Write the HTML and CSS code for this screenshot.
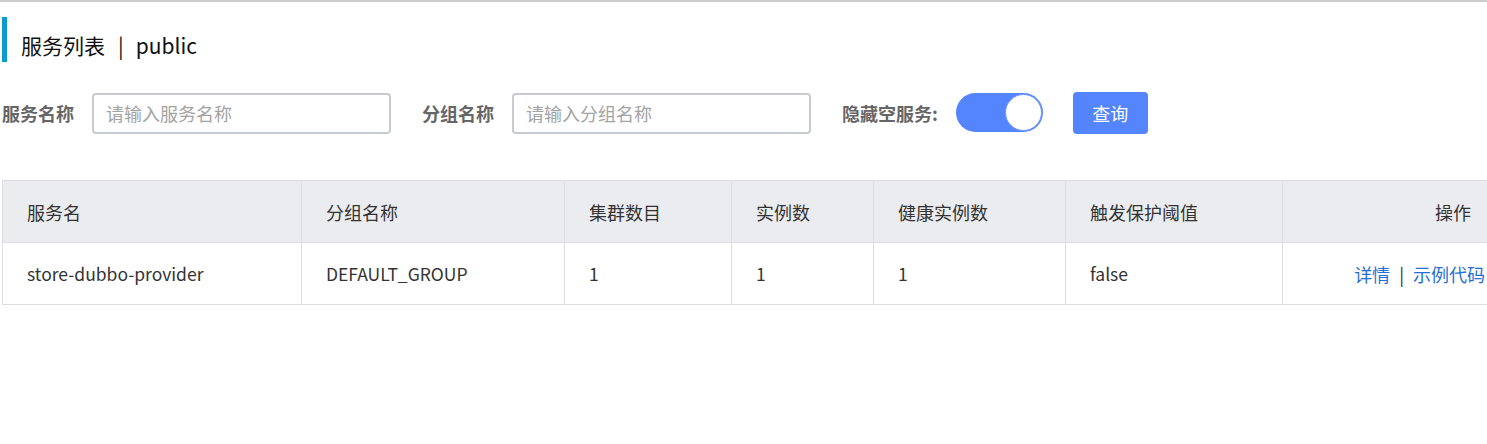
FILE: index.html
```html
<!DOCTYPE html>
<html lang="zh-CN">
<head>
<meta charset="utf-8">
<title>服务列表</title>
<link rel="stylesheet" href="styles.css">
</head>
<body>
<div class="page">
  <div class="title-bar">
    <span class="title-text">服务列表</span><span class="title-sep">|</span><span class="title-ns">public</span>
  </div>

  <div class="filters">
    <label class="f-label">服务名称</label>
    <div class="f-input"><span class="ph">请输入服务名称</span></div>
    <label class="f-label l2">分组名称</label>
    <div class="f-input"><span class="ph">请输入分组名称</span></div>
    <label class="f-label l3">隐藏空服务:</label>
    <div class="switch"><span class="knob"></span></div>
    <button class="btn">查询</button>
  </div>

  <div class="table-wrap">
    <table class="grid">
      <colgroup>
        <col class="c1"><col class="c2"><col class="c3"><col class="c4"><col class="c5"><col class="c6"><col class="c7">
      </colgroup>
      <thead>
        <tr>
          <th>服务名</th>
          <th>分组名称</th>
          <th>集群数目</th>
          <th>实例数</th>
          <th>健康实例数</th>
          <th>触发保护阈值</th>
          <th class="op-h">操作</th>
        </tr>
      </thead>
      <tbody>
        <tr>
          <td>store-dubbo-provider</td>
          <td>DEFAULT_GROUP</td>
          <td>1</td>
          <td>1</td>
          <td>1</td>
          <td>false</td>
          <td class="op"><a class="lnk">详情</a><span class="sep">|</span><a class="lnk">示例代码</a></td>
        </tr>
      </tbody>
    </table>
  </div>
</div>
</body>
</html>
```
FILE: styles.css
```css
html, body {
  margin: 0;
  padding: 0;
  background: #fff;
}
body {
  font-family: "Noto Sans CJK SC", "Noto Sans", sans-serif;
  color: #333;
  overflow: hidden;
}
.page {
  border-top: 2px solid #cdcdcd;
  padding-left: 2px;
  min-height: 442px;
}
.title-bar {
  margin-top: 15px;
  height: 45px;
  border-left: 5px solid #0a9bd1;
  padding-left: 14px;
  display: flex;
  align-items: center;
  font-size: 21px;
  color: #111;
  padding-top: 11px;
  box-sizing: border-box;
}
.title-sep {
  margin: 0 12px 0 13px;
}
.filters {
  margin-top: 30px;
  display: flex;
  align-items: center;
  height: 42px;
}
.f-label {
  font-size: 18px;
  font-weight: bold;
  color: #666;
  margin-right: 18px;
  line-height: 1;
}
.f-label.l2 { margin-left: 31px; margin-right: 18px; }
.f-label.l3 { margin-left: 31px; margin-right: 18px; }
.f-input {
  width: 299px;
  height: 41px;
  box-sizing: border-box;
  border: 2px solid #c8cad2;
  border-radius: 4px;
  display: flex;
  align-items: center;
  padding-left: 12px;
}
.ph {
  font-size: 18px;
  color: #a3a3a3;
}
.switch {
  width: 87px;
  height: 39px;
  box-sizing: border-box;
  border-radius: 20px;
  background: #5584ff;
  display: flex;
  justify-content: flex-end;
  align-items: center;
  padding: 1px;
  margin-top: -2px;
}
.knob {
  width: 35px;
  height: 35px;
  border-radius: 50%;
  background: #fff;
  border: 1px solid #6f97ff;
  box-sizing: content-box;
}
.btn {
  margin-left: 30px;
  width: 75px;
  height: 42px;
  border: none;
  border-radius: 4px;
  background: #5584ff;
  color: #fff;
  font-family: "Noto Sans CJK SC", sans-serif;
  font-size: 18px;
  padding: 0;
}
.table-wrap {
  margin-top: 46px;
  width: 1485px;
  overflow: hidden;
}
.grid {
  border-collapse: collapse;
  table-layout: fixed;
  width: 1500px;
  font-size: 18px;
  color: #333;
}
.c1 { width: 299px; }
.c2 { width: 263px; }
.c3 { width: 167px; }
.c4 { width: 142px; }
.c5 { width: 192px; }
.c6 { width: 217px; }
.c7 { width: 220px; }
.grid th, .grid td {
  border: 1px solid #dcdee3;
  height: 62px;
  padding: 0 24px;
  text-align: left;
  font-weight: normal;
  white-space: nowrap;
  box-sizing: border-box;
}
.grid td {
  font-size: 17.5px;
}
.grid th {
  background: #ebecf0;
}
.grid th.op-h {
  text-align: right;
  padding-right: 31px;
}
.grid td.op {
  text-align: right;
  padding-right: 17px;
  font-size: 18px;
}
.lnk {
  color: #1f6fd6;
  cursor: pointer;
}
.sep {
  color: #333;
  margin: 0 9px;
}
```
